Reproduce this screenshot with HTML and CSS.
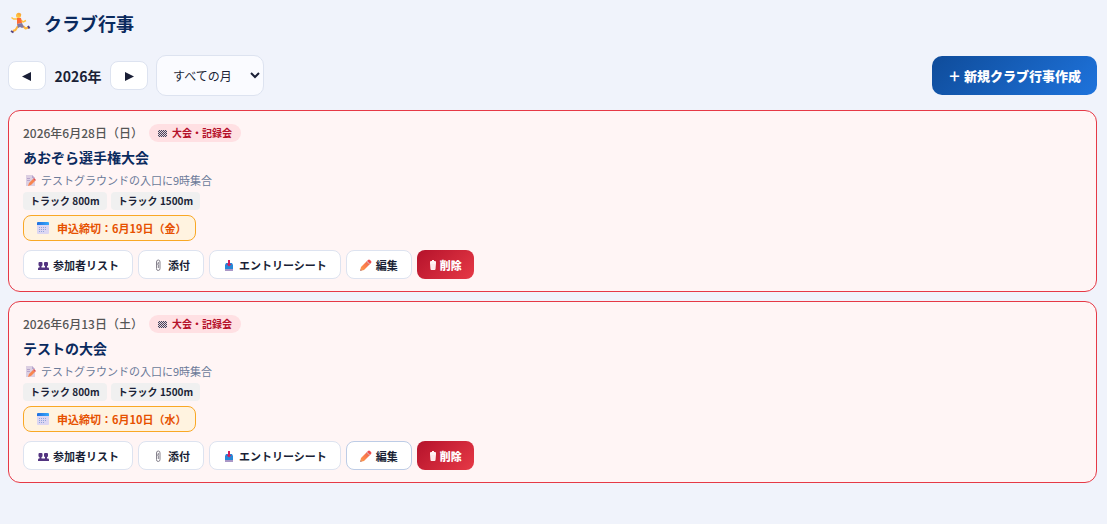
FILE: index.html
```html
<!DOCTYPE html>
<html lang="ja">
<head>
    <meta charset="UTF-8">
    <meta name="viewport" content="width=device-width, initial-scale=1.0">
    <title>クラブ行事</title>
    <link rel="stylesheet" href="styles.css">
</head>
<body>

    <!-- Shared icons -->
    <svg class="sprite" aria-hidden="true">
        <defs>
            <linearGradient id="pencilFill" x1="0" y1="1" x2="1" y2="0">
                <stop offset="0" stop-color="#ffa04d"/>
                <stop offset="1" stop-color="#f4604c"/>
            </linearGradient>
            <linearGradient id="calendarTop" x1="0" y1="0" x2="1" y2="0">
                <stop offset="0" stop-color="#1f6fe0"/>
                <stop offset="1" stop-color="#35a8fb"/>
            </linearGradient>
            <pattern id="checks" width="2" height="2" patternUnits="userSpaceOnUse">
                <path fill="#494258" d="M0 0h1v1H0zM1 1h1v1H1z"/>
            </pattern>
        </defs>
        <symbol id="flag" viewBox="0 0 10 8">
            <rect width="9" height="7" y="1" fill="#e2d3dc"/>
            <rect width="9" height="7" y="1" fill="url(#checks)"/>
        </symbol>
        <symbol id="memo" viewBox="0 0 12 12">
            <path fill="#dccfe2" d="M1 1h6l3 3v8H1z"/>
            <path fill="#b7a5cc" d="M7 1l3 3H7zM2 4h3v1H2zM2 6h3v1H2z"/>
            <path fill="#f8854f" d="M4 9l4-4 2 2-4 4-3 1z"/>
            <path fill="#e05050" d="M8 5l1-1 2 2-1 1z"/>
        </symbol>
        <symbol id="calendar" viewBox="0 0 12 12">
            <rect y="1" width="12" height="11" rx="1" fill="#dcd6f2"/>
            <path fill="url(#calendarTop)" d="M1 0h10q1 0 1 1v2H0V1q0-1 1-1z"/>
            <path fill="#8fa5dc" d="M2 5h1v1H2zM4 5h1v1H4zM6 5h1v1H6zM8 5h1v1H8zM2 7h1v1H2zM4 7h1v1H4zM6 7h1v1H6zM8 7h1v1H8zM2 9h1v1H2zM4 9h1v1H4zM6 9h1v1H6z"/>
        </symbol>
        <symbol id="people" viewBox="0 0 12 12">
            <g fill="#533480">
                <rect x="1.500" y="3" width="4" height="4" rx="1"/>
                <rect x="7" y="3" width="4" height="4" rx="1"/>
                <path d="M2.500 6h2v3h-2zM8 6h2v3H8z"/>
                <path d="M1 11V9.500Q1 8.500 2 8.500h9q1 0 1 1V11z"/>
            </g>
        </symbol>
        <symbol id="clip" viewBox="0 0 12 12">
            <path fill="none" stroke="#85818c" stroke-width="1" d="M4.500 7V3q0-2 1.800-2T8 3v6.500q0 2-1.800 2T4.500 9.500V6q0-1 .9-1t.9 1v3M6.300 3v2"/>
        </symbol>
        <symbol id="inbox" viewBox="0 0 12 12">
            <path fill="#a997c7" d="M2 10h8v2H2z"/>
            <path fill="#2788d8" d="M3 4h6l1 2v4H2V6z"/>
            <path fill="#d51e5a" d="M5 1h2v4h1.500L6 7.500 3.500 5H5z"/>
        </symbol>
        <symbol id="pencil" viewBox="0 0 12 12">
            <path fill="url(#pencilFill)" d="M1 8l6-6 3 3-6 6-4 1z"/>
            <path fill="#f04e4e" d="M8 1q1-1 2 0l1 1q1 1 0 2l-1 1-3-3z"/>
            <path fill="#c9b2ba" d="M7 2l3 3-.6.6-3-3z"/>
            <path fill="#b98b93" d="M.6 10L0 12l2-.6z"/>
        </symbol>
        <symbol id="trash" viewBox="0 0 8 12">
            <path fill="#fff0f2" d="M3 1h2v1h1q1 0 1 1v1H1V3q0-1 1-1h1zM1 4h6l-.5 6q0 1-1 1h-3q-1 0-1-1z"/>
            <path stroke="#f3ccd2" stroke-width=".5" d="M3 5v5M5 5v5"/>
        </symbol>
    </svg>

    <header class="page-header">
        <svg class="runner" viewBox="0 0 22 22" aria-hidden="true">
            <g fill="none" stroke-linejoin="round">
                <path stroke="#ffc13d" stroke-width="1.500" d="M8 7H4.500L2.500 5.500M12 8l2 2 3-1.500"/>
                <path stroke="#ffb53d" stroke-width="2" d="M9 14l-2.500 4-2.500 1M14 14l2.500 2.500 3-1"/>
                <path stroke="#54417e" stroke-width="2" d="M2 19l2.500 1.500M19 14l1.500 2.500"/>
            </g>
            <path fill="#ff6b35" d="M8 6h4l1 5-5 1z"/>
            <path fill="#83789f" d="M8 12l5-1 2 4-2 1-2-1-2 1z"/>
            <circle cx="9.500" cy="3.500" r="2.500" fill="#ffc13d"/>
            <path fill="#f9aa3d" d="M8 2q1-2 3-1 2 1 1 3l-3-1z"/>
        </svg>
        <h1>クラブ行事</h1>
    </header>

    <div class="toolbar">
        <button class="btn nav-btn" type="button" aria-label="前の年">
            <svg viewBox="0 0 10 10"><path fill="currentColor" d="M9 1v9L0 5.500z"/></svg>
        </button>
        <span class="year">2026年</span>
        <button class="btn nav-btn" type="button" aria-label="次の年">
            <svg viewBox="0 0 10 10"><path fill="currentColor" d="M1 1l9 4.500L1 10z"/></svg>
        </button>
        <div class="month-wrap">
            <select class="month" aria-label="月">
                <option>すべての月</option>
            </select>
            <svg class="chevron" viewBox="0 0 10 8" aria-hidden="true"><path fill="none" stroke="currentColor" stroke-width="2" d="M1 2l4 4 4-4"/></svg>
        </div>
        <button class="create-btn" type="button">＋ 新規クラブ行事作成</button>
    </div>

    <main class="event-list">
        <article class="event">
            <div class="event-head">
                <time class="date" datetime="2026-06-28">2026年6月28日（日）</time>
                <span class="badge"><svg class="icon-flag"><use href="#flag"/></svg>大会・記録会</span>
            </div>
            <h2>あおぞら選手権大会</h2>
            <p class="note"><svg class="icon"><use href="#memo"/></svg>テストグラウンドの入口に9時集合</p>
            <div class="tags">
                <span class="tag">トラック 800m</span>
                <span class="tag">トラック 1500m</span>
            </div>
            <div class="deadline"><svg class="icon"><use href="#calendar"/></svg>申込締切：6月19日（金）</div>
            <div class="actions">
                <button class="btn" type="button"><svg class="icon"><use href="#people"/></svg>参加者リスト</button>
                <button class="btn" type="button"><svg class="icon"><use href="#clip"/></svg>添付</button>
                <button class="btn" type="button"><svg class="icon"><use href="#inbox"/></svg>エントリーシート</button>
                <button class="btn" type="button"><svg class="icon"><use href="#pencil"/></svg>編集</button>
                <button class="btn btn-danger" type="button"><svg class="icon-trash"><use href="#trash"/></svg>削除</button>
            </div>
        </article>

        <article class="event">
            <div class="event-head">
                <time class="date" datetime="2026-06-13">2026年6月13日（土）</time>
                <span class="badge"><svg class="icon-flag"><use href="#flag"/></svg>大会・記録会</span>
            </div>
            <h2>テストの大会</h2>
            <p class="note"><svg class="icon"><use href="#memo"/></svg>テストグラウンドの入口に9時集合</p>
            <div class="tags">
                <span class="tag">トラック 800m</span>
                <span class="tag">トラック 1500m</span>
            </div>
            <div class="deadline"><svg class="icon"><use href="#calendar"/></svg>申込締切：6月10日（水）</div>
            <div class="actions">
                <button class="btn" type="button"><svg class="icon"><use href="#people"/></svg>参加者リスト</button>
                <button class="btn" type="button"><svg class="icon"><use href="#clip"/></svg>添付</button>
                <button class="btn" type="button"><svg class="icon"><use href="#inbox"/></svg>エントリーシート</button>
                <button class="btn btn-active" type="button"><svg class="icon"><use href="#pencil"/></svg>編集</button>
                <button class="btn btn-danger" type="button"><svg class="icon-trash"><use href="#trash"/></svg>削除</button>
            </div>
        </article>
    </main>

</body>
</html>
```
FILE: styles.css
```css
* {
    box-sizing: border-box;
}

body {
    font-family: "Noto Sans CJK JP", sans-serif;
    margin: 0;
    padding: 9px 10px 10px 8px;
    background-color: #f0f3fb;
    color: #1a1f36;
}

h1, h2, p {
    margin: 0;
}

button, select {
    font-family: inherit;
    color: inherit;
    cursor: pointer;
}

.sprite {
    position: absolute;
    width: 0;
    height: 0;
}

/* Header */
.page-header {
    display: flex;
    align-items: center;
    gap: 12px;
    margin-bottom: 18px;
}

.page-header h1 {
    font-size: 18px;
    line-height: 28px;
    color: #0a2a5e;
}

.runner {
    width: 24px;
    height: 22px;
}

/* Year and month controls */
.toolbar {
    display: flex;
    align-items: center;
    gap: 8px;
    margin-bottom: 14px;
}

.btn {
    display: flex;
    align-items: center;
    justify-content: center;
    gap: 4px;
    height: 29px;
    padding: 0 13px;
    font-size: 11px;
    font-weight: 700;
    background-color: #fff;
    border: 1px solid #dde3f0;
    border-radius: 8px;
}

.nav-btn {
    width: 38px;
}

.nav-btn svg {
    flex: none;
    width: 10px;
    height: 10px;
}

.year {
    min-width: 48px;
    text-align: center;
    font-size: 14px;
    font-weight: 700;
}

.month-wrap {
    position: relative;
}

.month {
    display: block;
    appearance: none;
    width: 108px;
    height: 41px;
    padding: 0 16px;
    font-size: 12px;
    background-color: #fafbff;
    border: 1px solid #dde3f0;
    border-radius: 10px;
}

.chevron {
    position: absolute;
    right: 4px;
    top: 16px;
    width: 10px;
    height: 8px;
    pointer-events: none;
}

.create-btn {
    margin-left: auto;
    height: 39px;
    padding: 0 16px;
    font-size: 13px;
    font-weight: 900;
    color: #fff;
    background: linear-gradient(135deg, #0f4c9a, #1e73dc);
    border: none;
    border-radius: 10px;
}

/* Event cards */
.event-list {
    display: flex;
    flex-direction: column;
    gap: 9px;
}

.event {
    padding: 12px 14px;
    background-color: #fff5f5;
    border: 1px solid #e63946;
    border-radius: 12px;
}

.event-head {
    display: flex;
    align-items: center;
    gap: 6px;
}

.date {
    font-size: 12px;
    line-height: 20px;
    font-weight: 500;
    color: #555;
}

.badge {
    display: flex;
    align-items: center;
    gap: 4px;
    padding: 0 9px;
    font-size: 10px;
    line-height: 18px;
    font-weight: 700;
    color: #b5122b;
    background-color: #ffe0e3;
    border-radius: 9px;
}

.event h2 {
    margin-top: 3px;
    font-size: 14px;
    line-height: 22px;
    color: #0a2a5e;
}

.note {
    display: flex;
    align-items: center;
    gap: 4px;
    padding-left: 2px;
    margin-top: 3px;
    font-size: 11px;
    line-height: 18px;
    color: #6b7a99;
}

.tags {
    display: flex;
    gap: 4px;
    margin-top: 3px;
}

.tag {
    padding: 0 7px;
    font-size: 10px;
    line-height: 18px;
    font-weight: 700;
    background-color: #f0f0f0;
    border-radius: 4px;
}

.deadline {
    display: flex;
    align-items: center;
    gap: 8px;
    width: fit-content;
    margin-top: 5px;
    padding: 0 9px 0 13px;
    font-size: 11px;
    line-height: 24px;
    font-weight: 700;
    color: #e65100;
    background-color: #fff3e0;
    border: 1px solid #f9a825;
    border-radius: 8px;
}

.actions {
    display: flex;
    flex-wrap: wrap;
    gap: 5px;
    margin-top: 9px;
}

.btn-active {
    border-color: #bdcce6;
}

.btn-danger {
    gap: 3px;
    padding: 0 12px;
    font-weight: 900;
    color: #fff;
    background: linear-gradient(135deg, #b5122b, #e63946);
    border: none;
}

/* Icon sizes */
.icon {
    flex: none;
    width: 12px;
    height: 12px;
}

.icon-flag {
    flex: none;
    width: 10px;
    height: 8px;
}

.icon-trash {
    flex: none;
    width: 8px;
    height: 12px;
}
```
